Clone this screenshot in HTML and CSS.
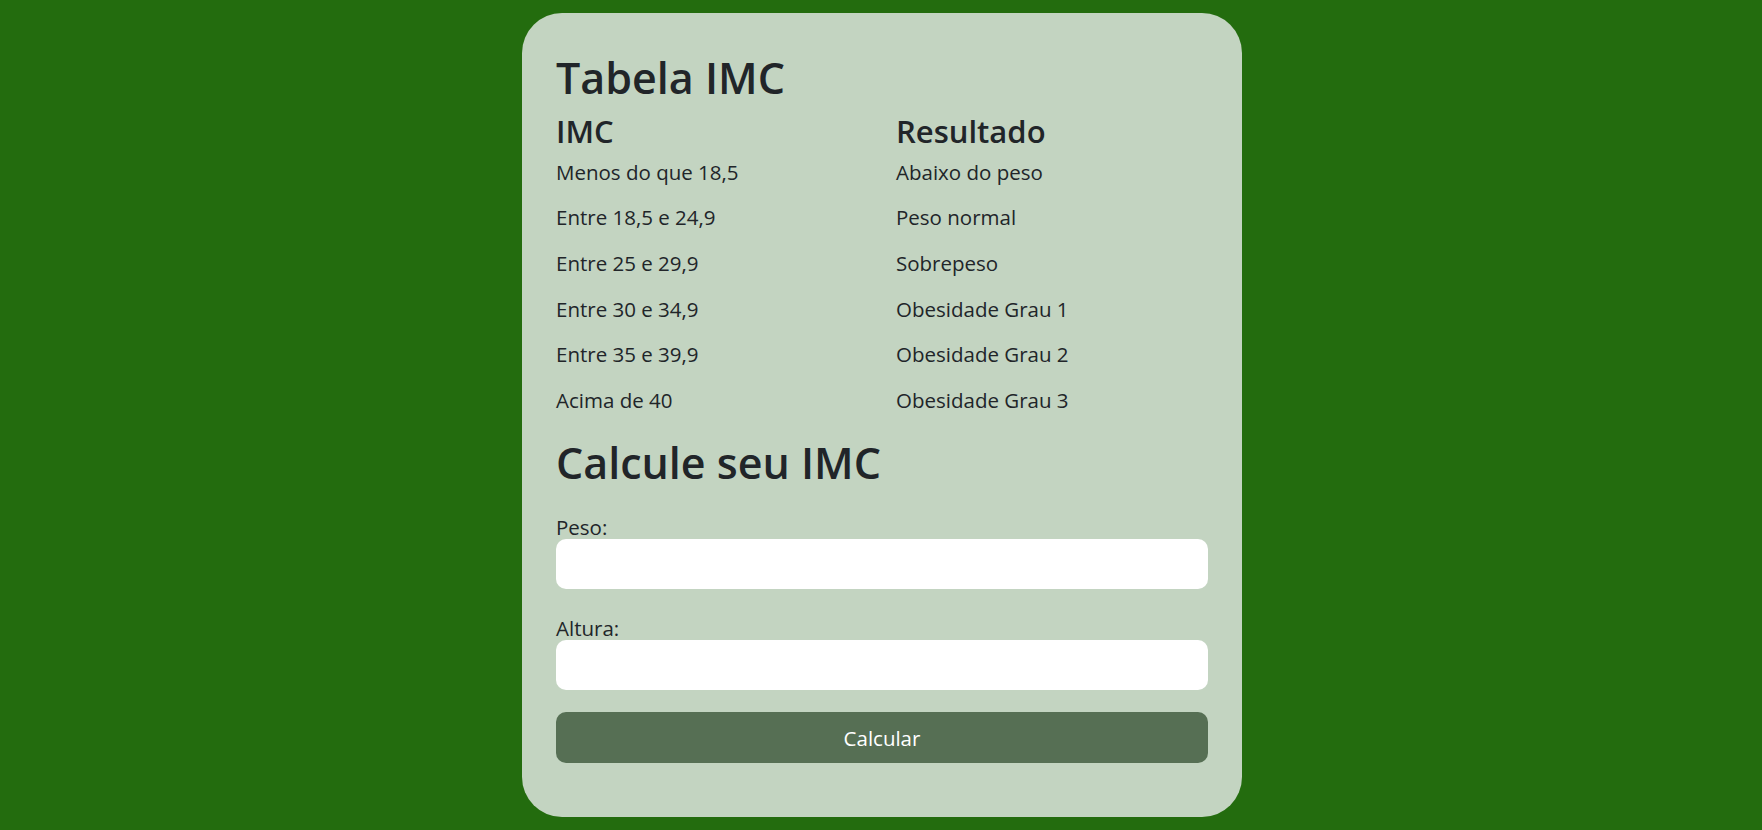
FILE: index.html
```html
<!DOCTYPE html>
<html lang="pt-BR">
<head>
<meta charset="utf-8">
<title>Tabela IMC</title>
<link rel="stylesheet" href="styles.css">
</head>
<body>
<main class="card">
  <h1 class="title">Tabela IMC</h1>
  <div class="table">
    <div class="head">IMC</div>
    <div class="head">Resultado</div>
    <div class="cell">Menos do que 18,5</div>
    <div class="cell">Abaixo do peso</div>
    <div class="cell">Entre 18,5 e 24,9</div>
    <div class="cell">Peso normal</div>
    <div class="cell">Entre 25 e 29,9</div>
    <div class="cell">Sobrepeso</div>
    <div class="cell">Entre 30 e 34,9</div>
    <div class="cell">Obesidade Grau 1</div>
    <div class="cell">Entre 35 e 39,9</div>
    <div class="cell">Obesidade Grau 2</div>
    <div class="cell">Acima de 40</div>
    <div class="cell">Obesidade Grau 3</div>
  </div>
  <h2 class="title title-calc">Calcule seu IMC</h2>
  <form class="form">
    <label class="label" for="peso">Peso:</label>
    <input class="input" id="peso" type="text">
    <label class="label label-gap" for="altura">Altura:</label>
    <input class="input" id="altura" type="text">
    <button class="button" type="button">Calcular</button>
  </form>
</main>
</body>
</html>
```
FILE: styles.css
```css
html, body {
  margin: 0;
  padding: 0;
}
body {
  background: #236c0e;
  font-family: "Open Sans", "Noto Sans", sans-serif;
  color: #212529;
  font-size: 20.5px;
  padding: 13px 0 0 2px;
  min-height: 830px;
  box-sizing: border-box;
}
.card {
  box-sizing: border-box;
  width: 720px;
  margin: 0 auto;
  background: #c3d4c1;
  border-radius: 40px;
  padding: 38.5px 34px 54px;
  height: 804px;
}
.title {
  margin: 0;
  font-size: 43px;
  font-weight: 600;
  line-height: 52px;
}
.table {
  display: grid;
  grid-template-columns: 340px 1fr;
  margin-top: 8px;
}
.head {
  font-size: 31px;
  font-weight: 600;
  line-height: 38px;
}
.cell {
  line-height: 45.7px;
}
.title-calc {
  margin-top: 13.6px;
}
.form {
  display: flex;
  flex-direction: column;
  margin-top: 26px;
}
.label {
  line-height: 24px;
}
.label-gap {
  margin-top: 26.3px;
}
.input {
  box-sizing: border-box;
  height: 50px;
  border: none;
  border-radius: 10px;
  background: #fff;
  margin: 0;
  padding: 0 12px;
  font: inherit;
}
.button {
  margin-top: 22.7px;
  height: 51px;
  border: none;
  border-radius: 10px;
  background: #566f54;
  color: #fff;
  font: inherit;
  line-height: 24px;
}
```
